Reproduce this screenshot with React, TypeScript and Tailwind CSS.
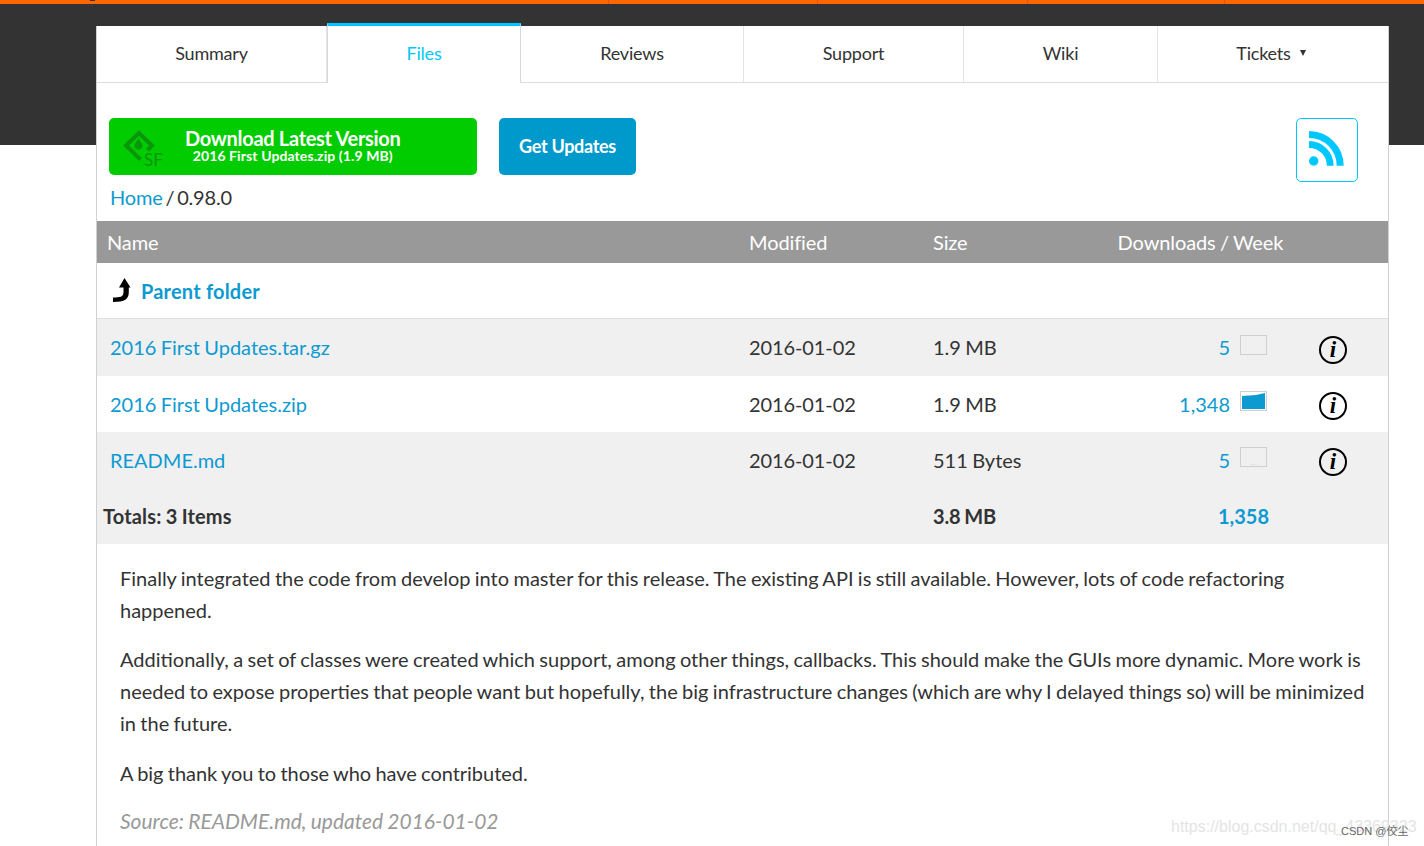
const linkClass = "text-[#0d9ad0]";

function Tab({ label, width, active }: { label: string; width: string; active?: boolean }) {
  if (active) {
    return (
      <div className={`${width} -mt-[3px] -mb-px flex h-[60px] items-center justify-center border-x border-t-[3px] border-x-[#d8d8d8] border-t-[#00c8ff] bg-white pb-[2px] text-[#00c8ff]`}>
        {label}
      </div>
    );
  }
  return <div className={`${width} flex items-center justify-center border-r border-[#e4e4e4] pb-[2px] text-[#333]`}>{label}</div>;
}

function SfLogo() {
  return (
    <div className="relative mt-[3px] h-[36px] w-[42px] shrink-0 text-[#0a960a]">
      <svg width="42" height="36" viewBox="0 0 42 36" className="block">
        <path d="M25.5 20 L30 15.5 L17 3 L4 15.5 L18.5 29.5" fill="none" stroke="currentColor" strokeWidth="4" />
        <path d="M16.5 8 C17.5 11 20.5 13 20.5 16 C20.5 18.2 18.8 19.5 16.5 19.5 C14.2 19.5 12.5 18.2 12.5 16 C12.5 13 15.5 11 16.5 8Z" fill="currentColor" />
      </svg>
      <span className="absolute left-[22px] top-[21px] text-[17px] leading-[17px]">SF</span>
    </div>
  );
}

function RssIcon() {
  return (
    <svg width="36" height="36" viewBox="0 0 36 36" fill="none" className="text-[#00c8ff]">
      <circle cx="4.7" cy="30" r="4.7" fill="currentColor" />
      <path d="M0 13.5 A21.2 21.2 0 0 1 21.2 34.7" stroke="currentColor" strokeWidth="6.8" />
      <path d="M0 3.5 A31.2 31.2 0 0 1 31.2 34.7" stroke="currentColor" strokeWidth="7" />
    </svg>
  );
}

function ParentArrow() {
  return (
    <svg width="20" height="26" viewBox="0 0 20 26" className="shrink-0">
      <path d="M13.5 0 L19.5 9.5 L17.8 9.5 L17.8 14 C17.8 21 14 24 2 24 L2 19.5 C9 19.5 12.5 19 12.5 14 L12.5 9.5 L8 9.5 Z" fill="#000" />
    </svg>
  );
}

function Spark({ fill, faint }: { fill?: boolean; faint?: boolean }) {
  return (
    <div className="h-[20px] w-[27px] border border-[#cfcfcf]">
      {fill && (
        <svg width="25" height="18" viewBox="0 0 25 18" className="block">
          <path d="M1 4 L15 3 L24 1 L24 17 L1 17 Z" fill="#0d9ad0" />
        </svg>
      )}
      {faint && (
        <svg width="25" height="18" viewBox="0 0 25 18" className="block">
          <path d="M8 17 L12 16 L18 17 Z" fill="#d5e3e8" />
        </svg>
      )}
    </div>
  );
}

function InfoIcon() {
  return (
    <div className="flex h-[28px] w-[28px] items-center justify-center rounded-full border-[2.75px] border-black font-['Liberation_Serif',serif] text-[23px] font-bold italic leading-none text-black">
      i
    </div>
  );
}

const files = [
  { name: "2016 First Updates.tar.gz", size: "1.9 MB", count: "5", height: "h-[57px]", bg: "bg-[#f0f0f0]", textPad: "pb-[1px]", sparkOffset: "-mt-[5px]", infoOffset: "mt-[4px]" },
  { name: "2016 First Updates.zip", size: "1.9 MB", count: "1,348", height: "h-[56px]", bg: "bg-white", textPad: "", sparkOffset: "-mt-[6px]", infoOffset: "mt-[3px]", fill: true },
  { name: "README.md", size: "511 Bytes", count: "5", height: "h-[56px]", bg: "bg-[#f0f0f0]", textPad: "", sparkOffset: "-mt-[6px]", infoOffset: "mt-[3px]", faint: true },
];

export default function App() {
  return (
    <div className="relative h-[846px] overflow-hidden bg-white font-['Lato',sans-serif] text-[#333]">
      {/* Dark header behind the card */}
      <div className="absolute inset-x-0 top-0 h-[145px] bg-[#333]">
        <div className="flex h-[4px] bg-[#ff6600]">
          <div className="w-[609px] border-r border-[#e8501a]" />
          <div className="w-[209px] border-r border-[#e8501a]" />
          <div className="w-[210px] border-r border-[#e8501a]" />
          <div className="w-[197px] border-r border-[#e8501a]" />
        </div>
        <div className="absolute left-[90px] top-0 h-px w-[5px] bg-[#333]" />
      </div>

      <div className="relative ml-[96px] mt-[26px] h-[830px] w-[1293px] border-x border-[#d0d0d0] bg-white">
        {/* Tabs */}
        <div className="flex h-[57px] border-b border-[#dcdcdc] text-[18px] tracking-[-0.2px]">
          <Tab label="Summary" width="w-[230px]" />
          <Tab label="Files" width="w-[194px]" active />
          <Tab label="Reviews" width="w-[223px]" />
          <Tab label="Support" width="w-[220px]" />
          <Tab label="Wiki" width="w-[194px]" />
          <div className="flex flex-1 items-center justify-center gap-[9px] pb-[2px] pr-[4px] text-[#333]">
            Tickets
            <span className="h-0 w-0 border-x-[3.5px] border-t-[6px] border-x-transparent border-t-[#333]" />
          </div>
        </div>

        {/* Actions */}
        <div className="flex h-[99px] items-start pl-[12px] pr-[30px] pt-[35px]">
          <div className="flex h-[57px] w-[368px] items-center rounded-[5px] bg-[#00cc00] pl-[13px] text-white">
            <SfLogo />
            <div className="ml-[21px] -mt-[4px] flex flex-col items-center font-bold">
              <span className="text-[20px] leading-[22px] tracking-[-0.3px]">Download Latest Version</span>
              <span className="text-[14px] leading-[13px] tracking-[0.1px]">2016 First Updates.zip (1.9 MB)</span>
            </div>
          </div>
          <div className="ml-[22px] flex h-[57px] w-[137px] items-center justify-center rounded-[5px] bg-[#0099cc] text-[18px] font-bold tracking-[-0.3px] text-white">
            Get Updates
          </div>
          <div className="ml-auto flex h-[64px] w-[62px] items-start justify-center rounded-[5px] border border-[#00c8ff] pt-[12px]">
            <RssIcon />
          </div>
        </div>

        {/* Breadcrumb */}
        <div className="mb-[7px] h-[32px] pl-[13px] text-[20px] leading-[30px] tracking-[-0.2px] [word-spacing:-2px]">
          <span className={linkClass}>Home</span> / 0.98.0
        </div>

        {/* File table */}
        <div className="grid h-[42px] grid-cols-[652px_184px_1fr] items-center bg-[#999] pl-[10px] text-[20px] tracking-[-0.1px] text-white [word-spacing:-0.75px]">
          <span>Name</span>
          <span className="-ml-[10px]">Modified</span>
          <div className="-ml-[10px] flex">
            <span>Size</span>
            <span className="ml-[150px]">Downloads / Week</span>
          </div>
        </div>
        <div className="flex h-[56px] items-center gap-[10px] border-b border-[#dedede] pl-[14px] text-[20px] font-bold tracking-[0.2px] text-[#0d9ad0]">
          <ParentArrow />
          Parent folder
        </div>

        {files.map((file) => (
          <div key={file.name} className={`grid ${file.height} grid-cols-[652px_184px_1fr] items-center ${file.bg} text-[20px] [word-spacing:-0.75px]`}>
            <span className={`pl-[13px] ${file.textPad} ${linkClass}`}>{file.name}</span>
            <span className={`tracking-[-0.1px] ${file.textPad}`}>2016-01-02</span>
            <div className="flex items-center">
              <span className={`w-[200px] ${file.textPad}`}>{file.size}</span>
              <span className={`w-[97px] text-right ${file.textPad} ${linkClass}`}>{file.count}</span>
              <div className={`ml-[10px] ${file.sparkOffset}`}>
                <Spark fill={file.fill} faint={file.faint} />
              </div>
              <div className={`ml-[52px] ${file.infoOffset}`}>
                <InfoIcon />
              </div>
            </div>
          </div>
        ))}

        <div className="grid h-[56px] grid-cols-[652px_184px_1fr] items-center bg-[#f0f0f0] text-[20px] font-bold [word-spacing:-0.75px]">
          <span className="pl-[6px] tracking-[0.15px]">Totals: 3 Items</span>
          <span />
          <div className="flex">
            <span className="w-[200px] tracking-[-0.2px]">3.8 MB</span>
            <span className={`w-[136px] text-right ${linkClass}`}>1,358</span>
          </div>
        </div>

        {/* Release notes */}
        <div className="flex flex-col gap-[17px] pl-[23px] pr-[20px] pt-[18px] text-[20px] leading-[32px] [word-spacing:-0.75px]">
          <p>
            Finally integrated the code from develop into master for this release. The existing API is still available. However, lots of code refactoring happened.
          </p>
          <p>
            Additionally, a set of classes were created which support, among other things, callbacks. This should make the GUIs more dynamic. More work is needed to expose properties that people want but hopefully, the big infrastructure changes (which are why I delayed things so) will be minimized in the future.
          </p>
          <p className="pt-[1px] tracking-[-0.04px]">A big thank you to those who have contributed.</p>
          <p className="-mt-[1px] text-[21px] italic text-[#999]">Source: README.md, updated 2016-01-02</p>
        </div>
      </div>

      {/* Image watermarks */}
      <span className="absolute left-[1171px] top-[816px] font-['Liberation_Sans',sans-serif] text-[16px] leading-[22px] text-[#e4e4e4]">
        https://blog.csdn.net/qq_43369323
      </span>
      <span className="absolute left-[1341px] top-[823px] font-['Liberation_Sans','Noto_Sans_CJK_SC',sans-serif] text-[11px] leading-[16px] text-[#666]">
        CSDN @佼尘
      </span>
    </div>
  );
}
